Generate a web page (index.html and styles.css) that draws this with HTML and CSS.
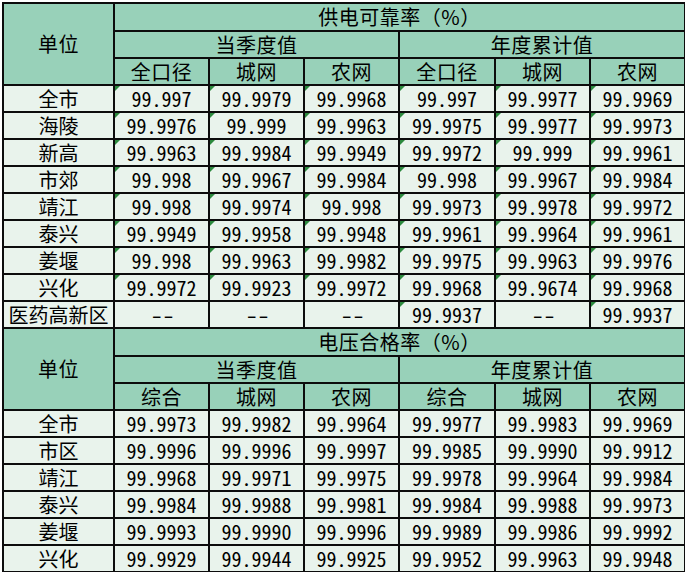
FILE: index.html
```html
<!DOCTYPE html>
<html lang="zh-CN">
<head>
<meta charset="utf-8">
<title>供电可靠率与电压合格率</title>
<link rel="stylesheet" href="styles.css">
</head>
<body>
<table class="sheet">
  <colgroup>
    <col class="c-unit">
    <col class="c-val"><col class="c-val"><col class="c-val">
    <col class="c-val2"><col class="c-val"><col class="c-val">
  </colgroup>
  <tbody>
    <tr class="h1"><th rowspan="3" class="hd">单位</th><th colspan="6" class="hd">供电可靠率（%）</th></tr>
    <tr><th colspan="3" class="hd">当季度值</th><th colspan="3" class="hd">年度累计值</th></tr>
    <tr><th class="hd">全口径</th><th class="hd">城网</th><th class="hd">农网</th><th class="hd">全口径</th><th class="hd">城网</th><th class="hd">农网</th></tr>
    <tr><td class="name">全市</td><td class="flag">99.997</td><td class="flag">99.9979</td><td class="flag">99.9968</td><td class="flag">99.997</td><td class="flag">99.9977</td><td class="flag">99.9969</td></tr>
    <tr><td class="name">海陵</td><td class="flag">99.9976</td><td class="flag">99.999</td><td class="flag">99.9963</td><td class="flag">99.9975</td><td class="flag">99.9977</td><td class="flag">99.9973</td></tr>
    <tr><td class="name">新高</td><td class="flag">99.9963</td><td class="flag">99.9984</td><td class="flag">99.9949</td><td class="flag">99.9972</td><td class="flag">99.999</td><td class="flag">99.9961</td></tr>
    <tr><td class="name">市郊</td><td class="flag">99.998</td><td class="flag">99.9967</td><td class="flag">99.9984</td><td class="flag">99.998</td><td class="flag">99.9967</td><td class="flag">99.9984</td></tr>
    <tr><td class="name">靖江</td><td class="flag">99.998</td><td class="flag">99.9974</td><td class="flag">99.998</td><td class="flag">99.9973</td><td class="flag">99.9978</td><td class="flag">99.9972</td></tr>
    <tr><td class="name">泰兴</td><td class="flag">99.9949</td><td class="flag">99.9958</td><td class="flag">99.9948</td><td class="flag">99.9961</td><td class="flag">99.9964</td><td class="flag">99.9961</td></tr>
    <tr><td class="name">姜堰</td><td class="flag">99.998</td><td class="flag">99.9963</td><td class="flag">99.9982</td><td class="flag">99.9975</td><td class="flag">99.9963</td><td class="flag">99.9976</td></tr>
    <tr><td class="name">兴化</td><td class="flag">99.9972</td><td class="flag">99.9923</td><td class="flag">99.9972</td><td class="flag">99.9968</td><td class="flag">99.9674</td><td class="flag">99.9968</td></tr>
    <tr><td class="name">医药高新区</td><td><span class="dash">--</span></td><td><span class="dash">--</span></td><td><span class="dash">--</span></td><td class="flag">99.9937</td><td><span class="dash">--</span></td><td class="flag">99.9937</td></tr>

    <tr class="h1"><th rowspan="3" class="hd">单位</th><th colspan="6" class="hd">电压合格率（%）</th></tr>
    <tr><th colspan="3" class="hd">当季度值</th><th colspan="3" class="hd">年度累计值</th></tr>
    <tr><th class="hd">综合</th><th class="hd">城网</th><th class="hd">农网</th><th class="hd">综合</th><th class="hd">城网</th><th class="hd">农网</th></tr>
    <tr><td class="name">全市</td><td>99.9973</td><td>99.9982</td><td>99.9964</td><td>99.9977</td><td>99.9983</td><td>99.9969</td></tr>
    <tr><td class="name">市区</td><td>99.9996</td><td>99.9996</td><td>99.9997</td><td>99.9985</td><td>99.9990</td><td>99.9912</td></tr>
    <tr><td class="name">靖江</td><td>99.9968</td><td>99.9971</td><td>99.9975</td><td>99.9978</td><td>99.9964</td><td>99.9984</td></tr>
    <tr><td class="name">泰兴</td><td>99.9984</td><td>99.9988</td><td>99.9981</td><td>99.9984</td><td>99.9988</td><td>99.9973</td></tr>
    <tr><td class="name">姜堰</td><td>99.9993</td><td>99.9990</td><td>99.9996</td><td>99.9989</td><td>99.9986</td><td>99.9992</td></tr>
    <tr><td class="name">兴化</td><td>99.9929</td><td>99.9944</td><td>99.9925</td><td>99.9952</td><td>99.9963</td><td>99.9948</td></tr>
  </tbody>
</table>
</body>
</html>
```

FILE: styles.css
```css
html, body {
  margin: 0;
  padding: 0;
  background: #ffffff;
}

body {
  padding: 2px 0 0 2px;
}

.sheet {
  border-collapse: collapse;
  table-layout: fixed;
  width: 682px;
  font-family: "Noto Sans CJK SC", "Noto Sans", sans-serif;
  font-size: 20px;
  font-weight: 400;
  color: #000000;
}

.c-unit { width: 111px; }
.c-val { width: 95px; }
.c-val2 { width: 96px; }

.sheet th,
.sheet td {
  border: 2px solid #0c0c0c;
  height: 25px;
  padding: 0;
  text-align: center;
  vertical-align: middle;
  font-weight: 400;
  line-height: 20px;
  white-space: nowrap;
}

.sheet .h1 th {
  height: 26px;
}

.sheet .hd {
  background: #98d1b9;
  letter-spacing: 0.5px;
}

.sheet td {
  background: #e9f3ec;
  font-family: "Noto Sans Mono CJK SC", "Noto Sans CJK SC", monospace;
}

.sheet td.name {
  font-family: "Noto Sans CJK SC", "Noto Sans", sans-serif;
  letter-spacing: 0;
}

.dash {
  display: inline-block;
  transform: scaleX(1.3);
  letter-spacing: -1px;
}

.sheet td.flag {
  position: relative;
}

.sheet td.flag::before {
  content: "";
  position: absolute;
  top: 0;
  left: 0;
  width: 0;
  height: 0;
  border-top: 5px solid #2c8a3e;
  border-right: 5px solid transparent;
}
```
